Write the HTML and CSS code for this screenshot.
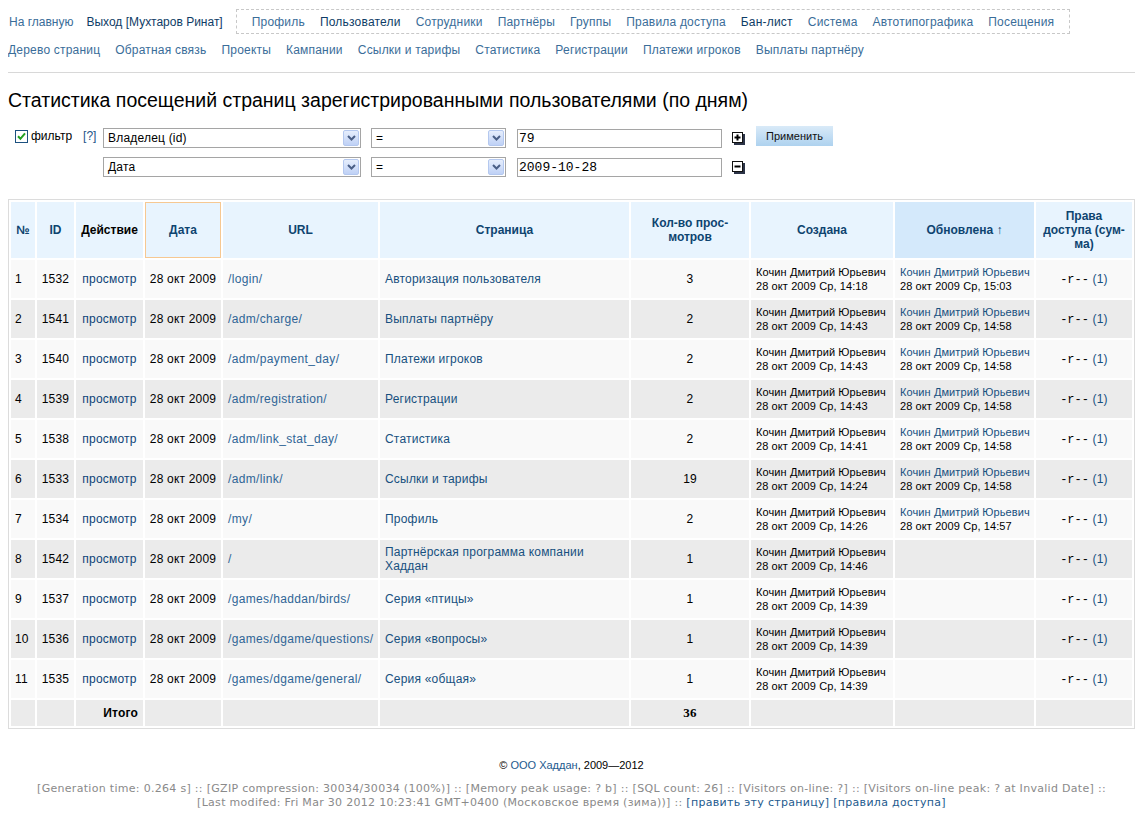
FILE: index.html
```html
<!DOCTYPE html>
<html lang="ru">
<head>
<meta charset="utf-8">
<title>Статистика посещений</title>
<link rel="stylesheet" href="styles.css">
</head>
<body>
<div class="nav-row1">
  <a class="nav-link" href="#">На главную</a>
  <a class="nav-link cur" href="#">Выход [Мухтаров Ринат]</a>
  <div class="nav-box">
    <a class="nav-link" href="#">Профиль</a>
    <a class="nav-link cur" href="#">Пользователи</a>
    <a class="nav-link" href="#">Сотрудники</a>
    <a class="nav-link" href="#">Партнёры</a>
    <a class="nav-link" href="#">Группы</a>
    <a class="nav-link" href="#">Правила доступа</a>
    <a class="nav-link cur" href="#">Бан-лист</a>
    <a class="nav-link" href="#">Система</a>
    <a class="nav-link" href="#">Автотипографика</a>
    <a class="nav-link" href="#">Посещения</a>
  </div>
</div>
<div class="nav-row2">
  <a class="nav-link" href="#">Дерево страниц</a>
  <a class="nav-link" href="#">Обратная связь</a>
  <a class="nav-link" href="#">Проекты</a>
  <a class="nav-link" href="#">Кампании</a>
  <a class="nav-link" href="#">Ссылки и тарифы</a>
  <a class="nav-link" href="#">Статистика</a>
  <a class="nav-link" href="#">Регистрации</a>
  <a class="nav-link" href="#">Платежи игроков</a>
  <a class="nav-link" href="#">Выплаты партнёру</a>
</div>
<div class="rule"></div>

<h1 class="title">Статистика посещений страниц зарегистрированными пользователями (по дням)</h1>

<div class="filter">
  <div class="frow">
    <div class="fhead">
      <svg class="chk" width="13" height="13" viewBox="0 0 13 13"><rect x="0.5" y="0.5" width="12" height="12" fill="#fff" stroke="#1c5180"/><path d="M3 6.3 L5.4 8.8 L10 3.4" fill="none" stroke="#22a022" stroke-width="2"/></svg>
      <span class="flabel">фильтр</span>
      <a class="help" href="#">[?]</a>
    </div>
    <div class="sel w-field"><span class="sel-val">Владелец (id)</span><span class="sel-btn"><svg width="9" height="6" viewBox="0 0 9 6"><path d="M1 1 L4.5 4.5 L8 1" fill="none" stroke="#4a5f86" stroke-width="2"/></svg></span></div>
    <div class="sel w-op"><span class="sel-val">=</span><span class="sel-btn"><svg width="9" height="6" viewBox="0 0 9 6"><path d="M1 1 L4.5 4.5 L8 1" fill="none" stroke="#4a5f86" stroke-width="2"/></svg></span></div>
    <div class="inp">79</div>
    <svg class="ico" width="13" height="13" viewBox="0 0 13 13"><rect x="2" y="2" width="11" height="11" fill="#2b3347"/><rect x="0.5" y="0.5" width="10" height="10" fill="#fff" stroke="#111"/><path d="M2.5 5.5h6M5.5 2.5v6" stroke="#000" stroke-width="2"/></svg>
    <button class="btn" type="button">Применить</button>
  </div>
  <div class="frow frow2">
    <div class="fhead"></div>
    <div class="sel w-field"><span class="sel-val">Дата</span><span class="sel-btn"><svg width="9" height="6" viewBox="0 0 9 6"><path d="M1 1 L4.5 4.5 L8 1" fill="none" stroke="#4a5f86" stroke-width="2"/></svg></span></div>
    <div class="sel w-op"><span class="sel-val">=</span><span class="sel-btn"><svg width="9" height="6" viewBox="0 0 9 6"><path d="M1 1 L4.5 4.5 L8 1" fill="none" stroke="#4a5f86" stroke-width="2"/></svg></span></div>
    <div class="inp">2009-10-28</div>
    <svg class="ico" width="13" height="13" viewBox="0 0 13 13"><rect x="2" y="2" width="11" height="11" fill="#2b3347"/><rect x="0.5" y="0.5" width="10" height="10" fill="#fff" stroke="#111"/><path d="M2.5 5.5h6" stroke="#000" stroke-width="2"/></svg>
  </div>
</div>

<table class="grid">
  <thead>
    <tr>
      <th class="c-n"><a href="#">№</a></th>
      <th class="c-id"><a href="#">ID</a></th>
      <th class="c-act plain">Действие</th>
      <th class="c-date sorted-alt"><a href="#">Дата</a></th>
      <th class="c-url"><a href="#">URL</a></th>
      <th class="c-page"><a href="#">Страница</a></th>
      <th class="c-cnt"><a href="#">Кол-во прос-<br>мотров</a></th>
      <th class="c-cr"><a href="#">Создана</a></th>
      <th class="c-up sorted"><a href="#">Обновлена ↑</a></th>
      <th class="c-rt"><a href="#">Права<br>доступа (сум-<br>ма)</a></th>
    </tr>
  </thead>
  <tbody>
    <tr class="odd"><td>1</td><td class="ctr">1532</td><td class="ctr"><a class="act" href="#">просмотр</a></td><td class="ctr">28 окт 2009</td><td><a class="url" href="#">/login/</a></td><td><a class="pg" href="#">Авторизация пользователя</a></td><td class="ctr">3</td><td class="small">Кочин Дмитрий Юрьевич<br>28 окт 2009 Ср, 14:18</td><td class="small"><a class="pg" href="#">Кочин Дмитрий Юрьевич</a><br>28 окт 2009 Ср, 15:03</td><td class="ctr"><span class="mono">-r--</span> <a class="pg" href="#">(1)</a></td></tr>
    <tr class="even"><td>2</td><td class="ctr">1541</td><td class="ctr"><a class="act" href="#">просмотр</a></td><td class="ctr">28 окт 2009</td><td><a class="url" href="#">/adm/charge/</a></td><td><a class="pg" href="#">Выплаты партнёру</a></td><td class="ctr">2</td><td class="small">Кочин Дмитрий Юрьевич<br>28 окт 2009 Ср, 14:43</td><td class="small"><a class="pg" href="#">Кочин Дмитрий Юрьевич</a><br>28 окт 2009 Ср, 14:58</td><td class="ctr"><span class="mono">-r--</span> <a class="pg" href="#">(1)</a></td></tr>
    <tr class="odd"><td>3</td><td class="ctr">1540</td><td class="ctr"><a class="act" href="#">просмотр</a></td><td class="ctr">28 окт 2009</td><td><a class="url" href="#">/adm/payment_day/</a></td><td><a class="pg" href="#">Платежи игроков</a></td><td class="ctr">2</td><td class="small">Кочин Дмитрий Юрьевич<br>28 окт 2009 Ср, 14:43</td><td class="small"><a class="pg" href="#">Кочин Дмитрий Юрьевич</a><br>28 окт 2009 Ср, 14:58</td><td class="ctr"><span class="mono">-r--</span> <a class="pg" href="#">(1)</a></td></tr>
    <tr class="even"><td>4</td><td class="ctr">1539</td><td class="ctr"><a class="act" href="#">просмотр</a></td><td class="ctr">28 окт 2009</td><td><a class="url" href="#">/adm/registration/</a></td><td><a class="pg" href="#">Регистрации</a></td><td class="ctr">2</td><td class="small">Кочин Дмитрий Юрьевич<br>28 окт 2009 Ср, 14:43</td><td class="small"><a class="pg" href="#">Кочин Дмитрий Юрьевич</a><br>28 окт 2009 Ср, 14:58</td><td class="ctr"><span class="mono">-r--</span> <a class="pg" href="#">(1)</a></td></tr>
    <tr class="odd"><td>5</td><td class="ctr">1538</td><td class="ctr"><a class="act" href="#">просмотр</a></td><td class="ctr">28 окт 2009</td><td><a class="url" href="#">/adm/link_stat_day/</a></td><td><a class="pg" href="#">Статистика</a></td><td class="ctr">2</td><td class="small">Кочин Дмитрий Юрьевич<br>28 окт 2009 Ср, 14:41</td><td class="small"><a class="pg" href="#">Кочин Дмитрий Юрьевич</a><br>28 окт 2009 Ср, 14:58</td><td class="ctr"><span class="mono">-r--</span> <a class="pg" href="#">(1)</a></td></tr>
    <tr class="even"><td>6</td><td class="ctr">1533</td><td class="ctr"><a class="act" href="#">просмотр</a></td><td class="ctr">28 окт 2009</td><td><a class="url" href="#">/adm/link/</a></td><td><a class="pg" href="#">Ссылки и тарифы</a></td><td class="ctr">19</td><td class="small">Кочин Дмитрий Юрьевич<br>28 окт 2009 Ср, 14:24</td><td class="small"><a class="pg" href="#">Кочин Дмитрий Юрьевич</a><br>28 окт 2009 Ср, 14:58</td><td class="ctr"><span class="mono">-r--</span> <a class="pg" href="#">(1)</a></td></tr>
    <tr class="odd"><td>7</td><td class="ctr">1534</td><td class="ctr"><a class="act" href="#">просмотр</a></td><td class="ctr">28 окт 2009</td><td><a class="url" href="#">/my/</a></td><td><a class="pg" href="#">Профиль</a></td><td class="ctr">2</td><td class="small">Кочин Дмитрий Юрьевич<br>28 окт 2009 Ср, 14:26</td><td class="small"><a class="pg" href="#">Кочин Дмитрий Юрьевич</a><br>28 окт 2009 Ср, 14:57</td><td class="ctr"><span class="mono">-r--</span> <a class="pg" href="#">(1)</a></td></tr>
    <tr class="even"><td>8</td><td class="ctr">1542</td><td class="ctr"><a class="act" href="#">просмотр</a></td><td class="ctr">28 окт 2009</td><td><a class="url" href="#">/</a></td><td><a class="pg" href="#">Партнёрская программа компании Хаддан</a></td><td class="ctr">1</td><td class="small">Кочин Дмитрий Юрьевич<br>28 окт 2009 Ср, 14:46</td><td class="small"></td><td class="ctr"><span class="mono">-r--</span> <a class="pg" href="#">(1)</a></td></tr>
    <tr class="odd"><td>9</td><td class="ctr">1537</td><td class="ctr"><a class="act" href="#">просмотр</a></td><td class="ctr">28 окт 2009</td><td><a class="url" href="#">/games/haddan/birds/</a></td><td><a class="pg" href="#">Серия «птицы»</a></td><td class="ctr">1</td><td class="small">Кочин Дмитрий Юрьевич<br>28 окт 2009 Ср, 14:39</td><td class="small"></td><td class="ctr"><span class="mono">-r--</span> <a class="pg" href="#">(1)</a></td></tr>
    <tr class="even"><td>10</td><td class="ctr">1536</td><td class="ctr"><a class="act" href="#">просмотр</a></td><td class="ctr">28 окт 2009</td><td><a class="url" href="#">/games/dgame/questions/</a></td><td><a class="pg" href="#">Серия «вопросы»</a></td><td class="ctr">1</td><td class="small">Кочин Дмитрий Юрьевич<br>28 окт 2009 Ср, 14:39</td><td class="small"></td><td class="ctr"><span class="mono">-r--</span> <a class="pg" href="#">(1)</a></td></tr>
    <tr class="odd"><td>11</td><td class="ctr">1535</td><td class="ctr"><a class="act" href="#">просмотр</a></td><td class="ctr">28 окт 2009</td><td><a class="url" href="#">/games/dgame/general/</a></td><td><a class="pg" href="#">Серия «общая»</a></td><td class="ctr">1</td><td class="small">Кочин Дмитрий Юрьевич<br>28 окт 2009 Ср, 14:39</td><td class="small"></td><td class="ctr"><span class="mono">-r--</span> <a class="pg" href="#">(1)</a></td></tr>
    <tr class="total"><td></td><td></td><td class="tot-label">Итого</td><td></td><td></td><td></td><td class="ctr tot-num">36</td><td></td><td></td><td></td></tr>
  </tbody>
</table>

<div class="copy">© <a href="#">ООО Хаддан</a>, 2009—2012</div>
<div class="stats">[Generation time: 0.264 s] :: [GZIP compression: 30034/30034 (100%)] :: [Memory peak usage: ? b] :: [SQL count: 26] :: [Visitors on-line: ?] :: [Visitors on-line peak: ? at Invalid Date] ::<br>[Last modifed: Fri Mar 30 2012 10:23:41 GMT+0400 (Московское время (зима))] :: <a href="#">[править эту страницу]</a> <a href="#">[правила доступа]</a></div>
</body>
</html>
```

FILE: styles.css
```css
html { background: #fff; }
body {
  margin: 8px;
  font-family: "Liberation Sans", Arial, sans-serif;
  font-size: 12px;
  color: #000;
}
a { text-decoration: none; }

.nav-link { color: #3a6d99; white-space: nowrap; line-height: 14px; }
.nav-link.cur { color: #0e3c66; }

.nav-row1 {
  display: flex;
  align-items: center;
  margin-top: 1px;
  height: 25px;
}
.nav-row1 > .nav-link { margin-left: 1px; margin-right: 13px; }
.nav-row1 > .nav-link.cur { margin-left: 0; margin-right: 13px; }
.nav-box {
  display: flex;
  align-items: center;
  gap: 15px;
  height: 25px;
  box-sizing: border-box;
  padding: 0 15px;
  border: 1px dashed #c8c8c8;
}
.nav-box .nav-link, .nav-row2 .nav-link { letter-spacing: 0.2px; }
.nav-row2 {
  display: flex;
  gap: 15px;
  margin-top: 9px;
}
.rule {
  margin-top: 15px;
  border-top: 1px solid #d8d8d8;
}

.title {
  margin: 16px 0 0 0;
  font-size: 19.5px;
  line-height: 22px;
  font-weight: normal;
}

.filter { margin-top: 16px; }
.frow { display: flex; align-items: center; height: 22px; }
.frow2 { margin-top: 7px; }
.fhead {
  width: 95px;
  display: flex;
  align-items: center;
  padding-left: 7px;
  box-sizing: border-box;
  align-self: flex-start;
  padding-top: 2px;
}
.chk { display: block; }
.flabel { margin-left: 3px; font-size: 12px; }
.help { margin-left: 11px; color: #1d5488; }

.sel {
  height: 20px;
  box-sizing: border-box;
  border: 1px solid #a5a5a5;
  background: #fff;
  display: flex;
  align-items: center;
  justify-content: space-between;
  padding: 0 1px 0 4px;
}
.w-field { width: 258px; }
.w-op { width: 135px; margin-left: 10px; }
.sel-val { font-size: 12px; letter-spacing: 0.2px; }
.sel-btn {
  width: 16px;
  height: 16px;
  box-sizing: border-box;
  border: 1px solid #b4c8ef;
  border-radius: 2px;
  background: linear-gradient(#e6eefc, #bfd1f6);
  display: flex;
  align-items: center;
  justify-content: center;
}
.inp {
  width: 205px;
  height: 19px;
  margin-left: 11px;
  box-sizing: border-box;
  border: 1px solid #a5a5a5;
  font-family: "Liberation Mono", "Courier New", monospace;
  font-size: 13px;
  line-height: 17px;
  padding-left: 1px;
}
.ico { margin-left: 10px; display: block; }
.btn {
  margin-left: 11px;
  width: 77px;
  height: 20px;
  border: none;
  padding: 0;
  background: linear-gradient(#d9eaf8, #aed2ef);
  font-family: "Liberation Sans", Arial, sans-serif;
  font-size: 11px;
  color: #111;
  align-self: flex-start;
  margin-top: -1px;
}

.grid {
  margin-top: 21px;
  width: 100%;
  table-layout: fixed;
  border: 1px solid #dcdcdc;
  border-spacing: 2px;
}
.grid th, .grid td {
  box-sizing: border-box;
  padding: 4px 5px;
  vertical-align: middle;
  text-align: left;
  font-size: 12px;
  line-height: 14px;
}
.grid td { letter-spacing: 0.2px; }
.grid th {
  background: #e8f4fe;
  text-align: center;
  font-weight: bold;
  height: 56px;
  color: #0e4470;
}
.grid th a { color: #0e4470; }
.grid th.plain { color: #000; }
.grid th.sorted { background: #d4e9fb; }
.grid th.sorted-alt { box-shadow: inset 0 0 0 1px #f6c892; }
.c-n { width: 24px; }
.c-id { width: 37px; }
.c-act { width: 67px; }
.c-date { width: 76px; }
.c-url { width: 155px; }
.c-page { width: 249px; }
.c-cnt { width: 118px; }
.c-cr { width: 142px; }
.c-up { width: 139px; }
.c-rt { width: 96px; }
.grid th.c-n { padding: 4px 2px; }

.grid td { height: 38px; }
.grid td:first-child { padding-left: 4px; }
.grid tr.odd td { background: #f9f9f9; }
.grid tr.even td { background: #ebebeb; }
.grid .ctr { text-align: center; padding-left: 2px; padding-right: 2px; }
.grid td.small { font-size: 11px; line-height: 14px; white-space: nowrap; padding-left: 5px; padding-right: 2px; letter-spacing: 0.1px; }
.act { color: #0d4377; }
.url { color: #2f6596; letter-spacing: 0.35px; }
.pg { color: #17507f; }
.mono { font-family: "Liberation Mono", "Courier New", monospace; font-size: 12px; letter-spacing: 0; }

.grid tr.total td { background: #ebebeb; height: 26px; padding-top: 2px; padding-bottom: 2px; }
.tot-label { text-align: right !important; font-weight: bold; }
.tot-num { font-weight: bold; font-family: "Liberation Serif", "Times New Roman", serif; font-size: 13px !important; }

.copy {
  margin-top: 29px;
  text-align: center;
  font-size: 11px;
  line-height: 14px;
}
.copy a { color: #1d5a8e; }
.stats {
  margin-top: 10px;
  text-align: center;
  font-family: "DejaVu Sans", Verdana, sans-serif;
  font-size: 11px;
  letter-spacing: 0.3px;
  line-height: 14px;
  color: #8a8a8a;
}
.stats a { color: #1d5a8e; }
```
